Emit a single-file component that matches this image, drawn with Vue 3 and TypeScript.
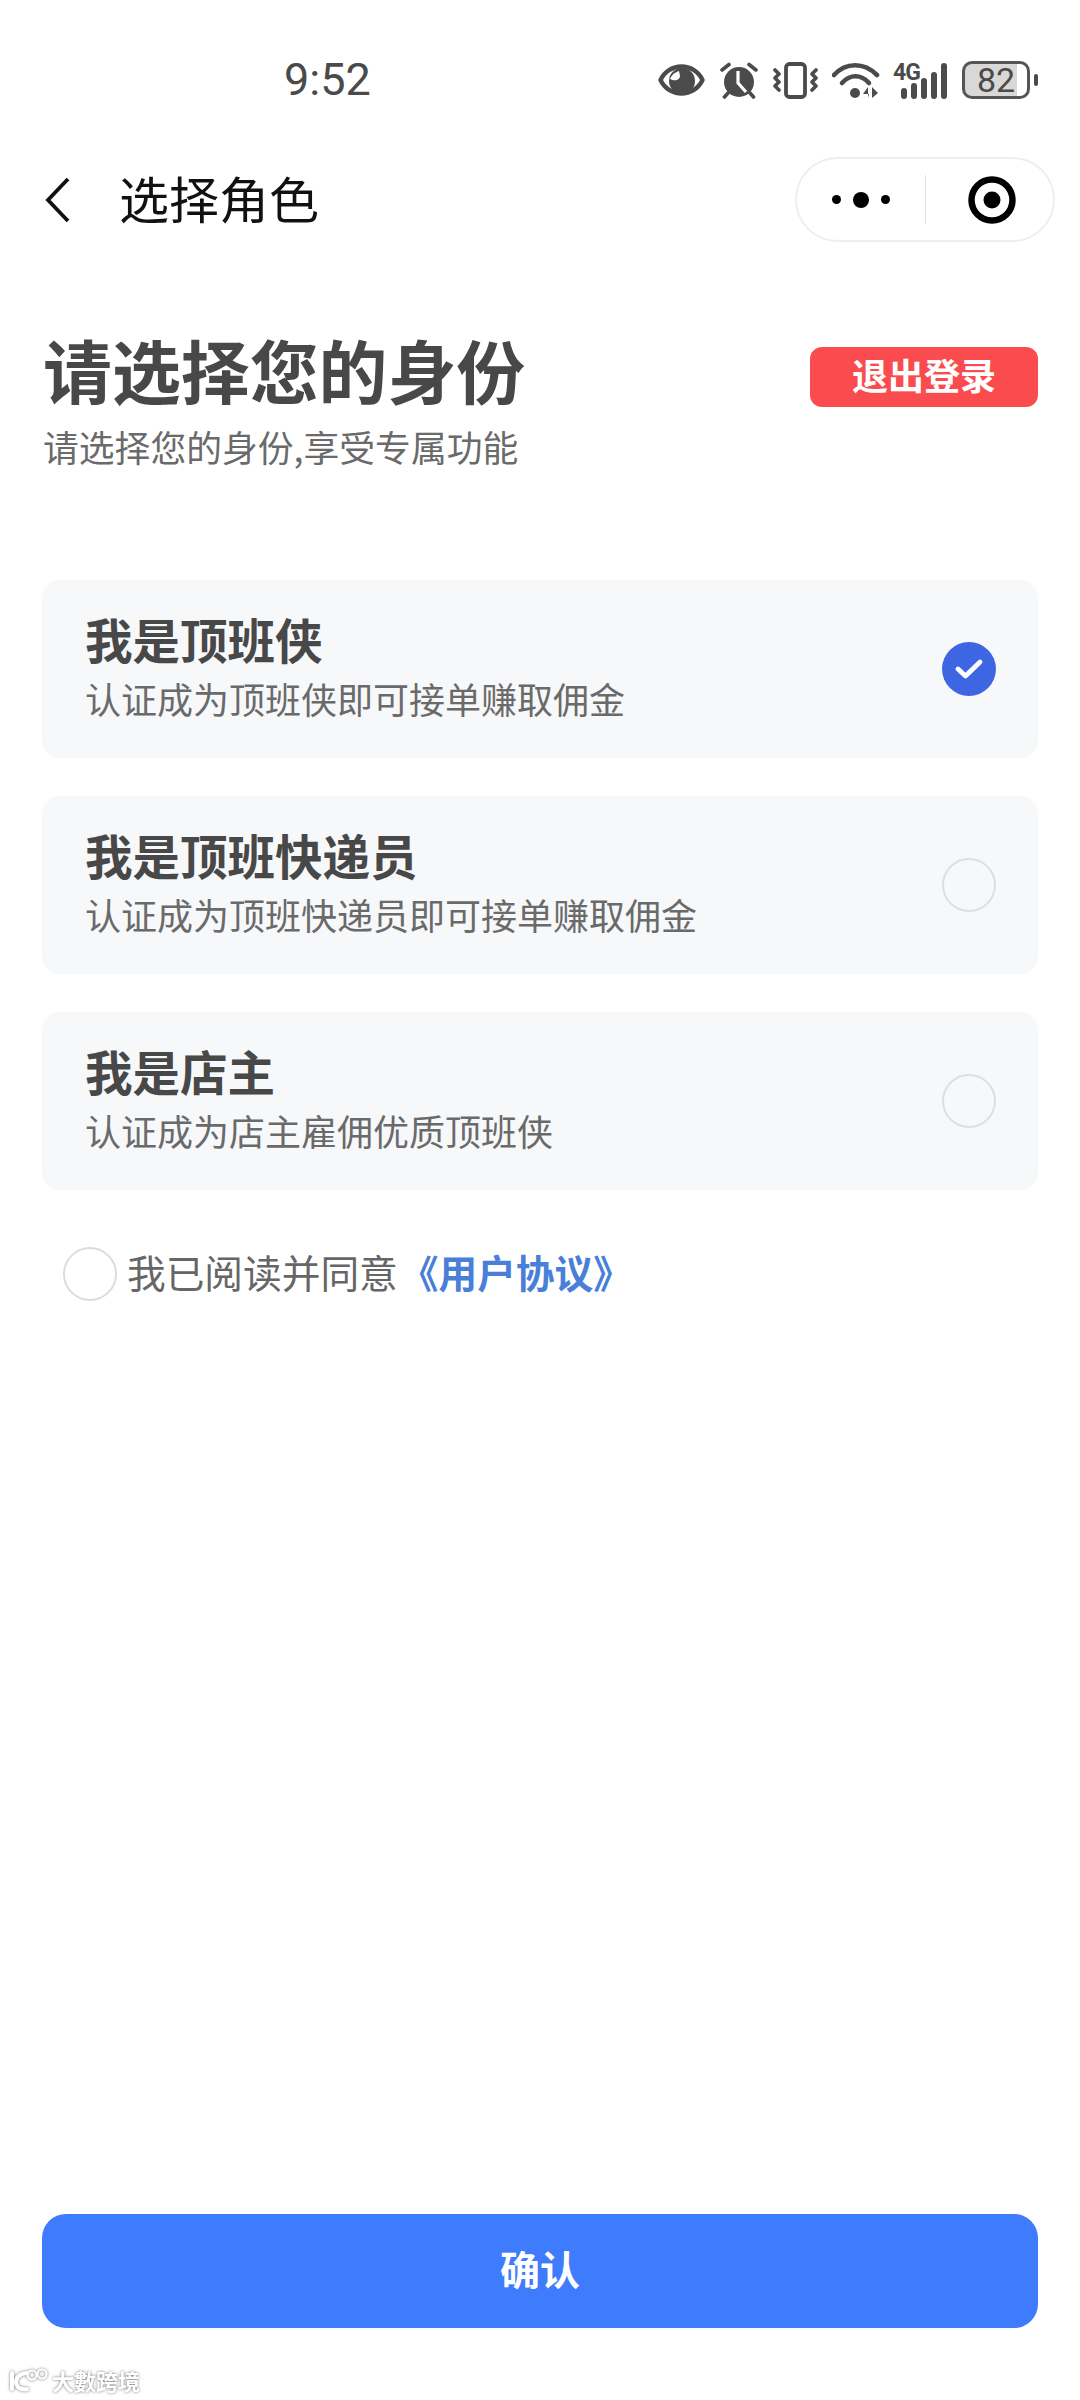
<script setup lang="ts">
interface Role {
  title: string
  desc: string
  checked: boolean
}
const roles: Role[] = [
  { title: '我是顶班侠', desc: '认证成为顶班侠即可接单赚取佣金', checked: true },
  { title: '我是顶班快递员', desc: '认证成为顶班快递员即可接单赚取佣金', checked: false },
  { title: '我是店主', desc: '认证成为店主雇佣优质顶班侠', checked: false },
]
const bars: number[] = [11, 16, 21, 27, 36]
</script>

<template>
  <div class="page">
    <div class="status">
      <span class="time">9:52</span>
      <div class="icons">
        <svg class="eye" width="47" height="34" viewBox="0 0 47 34">
          <path d="M2.5 17C11-1 36-1 44.5 17C36 35 11 35 2.5 17Z" fill="none" stroke="#4b4b4b" stroke-width="4.4" stroke-linejoin="round" />
          <circle cx="24" cy="18" r="13" fill="#4b4b4b" />
          <path d="M12 16C14 11 18 9 21 8L22 13C22 16 18 19 12 16Z" fill="#fff" />
        </svg>
        <svg class="alarm" width="38" height="37" viewBox="0 0 38 37">
          <circle cx="19" cy="20" r="15" fill="#4b4b4b" />
          <path d="M18 9V21L26 30" fill="none" stroke="#fff" stroke-width="3.2" />
          <path d="M2 8L9 2.5M36 8L29 2.5M8 31L4.5 35M30 31L33.5 35" fill="none" stroke="#4b4b4b" stroke-width="3.6" stroke-linecap="round" />
        </svg>
        <svg class="vibrate" width="45" height="37" viewBox="0 0 45 37">
          <rect x="13" y="2" width="19" height="33" rx="3.5" fill="none" stroke="#4b4b4b" stroke-width="3.8" />
          <path d="M2 8L6 12L2 16L6 20L2 24L6 28M43 8L39 12L43 16L39 20L43 24L39 28" fill="none" stroke="#4b4b4b" stroke-width="3.6" stroke-linecap="round" stroke-linejoin="round" />
        </svg>
        <svg class="wifi" width="48" height="37" viewBox="0 0 48 37">
          <path d="M2 13C14 0 32 0 45 13" fill="none" stroke="#4b4b4b" stroke-width="4.6" stroke-linecap="round" />
          <path d="M10 21C18 12 29 12 37 21" fill="none" stroke="#4b4b4b" stroke-width="4.6" stroke-linecap="round" />
          <circle cx="23" cy="31" r="5" fill="#4b4b4b" />
          <path d="M36 36V25L31 32H37ZM40 25V36L46 31Z" fill="#4b4b4b" />
        </svg>
        <div class="signal">
          <span class="net">4G</span>
          <div class="bars">
            <i v-for="h in bars" :key="h" class="bar" :style="{ height: h + 'px' }"></i>
          </div>
        </div>
        <div class="battery">
          <div class="cell">
            <span class="level">82</span>
          </div>
          <i class="nub"></i>
        </div>
      </div>
    </div>

    <div class="nav">
      <svg class="back" width="26" height="46" viewBox="0 0 26 46">
        <path d="M23 2L3 23L23 44" fill="none" stroke="#111" stroke-width="3.8" />
      </svg>
      <span class="nav-title">选择角色</span>
      <div class="capsule">
        <div class="more">
          <i class="dot"></i><i class="dot big"></i><i class="dot"></i>
        </div>
        <i class="divider"></i>
        <div class="close">
          <svg width="48" height="48" viewBox="0 0 48 48">
            <circle cx="24" cy="24" r="20.5" fill="none" stroke="#000" stroke-width="6.5" />
            <circle cx="24" cy="24" r="8.5" fill="#000" />
          </svg>
        </div>
      </div>
    </div>

    <div class="head">
      <div class="head-text">
        <h1>请选择您的身份</h1>
        <p>请选择您的身份,享受专属功能</p>
      </div>
      <div class="logout">退出登录</div>
    </div>

    <div class="cards">
      <div v-for="r in roles" :key="r.title" class="card">
        <div class="card-text">
          <div class="card-title">{{ r.title }}</div>
          <div class="card-desc">{{ r.desc }}</div>
        </div>
        <div class="radio" :class="{ on: r.checked }">
          <svg v-if="r.checked" width="30" height="24" viewBox="0 0 30 24">
            <path d="M4 12L11.5 19L26 5" fill="none" stroke="#fff" stroke-width="4.8" stroke-linecap="round" stroke-linejoin="round" />
          </svg>
        </div>
      </div>
    </div>

    <div class="agree">
      <i class="agree-circle"></i>
      <span class="agree-text">我已阅读并同意</span>
      <span class="agree-link">《用户协议》</span>
    </div>

    <div class="confirm">确认</div>

    <div class="watermark">
      <svg width="40" height="24" viewBox="0 0 40 24">
        <path d="M3 5V21M18 5C10 6 7 10 7 14C7 19 11 22 18 21" fill="none" stroke="#fff" stroke-width="4" stroke-linecap="round" />
        <circle cx="23" cy="7" r="4.5" fill="none" stroke="#fff" stroke-width="2.2" />
        <circle cx="33" cy="6" r="4.5" fill="none" stroke="#fff" stroke-width="2.2" />
      </svg>
      <span>大數跨境</span>
    </div>
  </div>
</template>

<style>
html,
body {
  margin: 0;
  background: #fff;
}
</style>

<style scoped>
.page {
  position: relative;
  box-sizing: border-box;
  width: 1080px;
  height: 2400px;
  padding-bottom: 72px;
  display: flex;
  flex-direction: column;
  background: #fff;
  font-family: "Noto Sans CJK SC", "Noto Sans", sans-serif;
  overflow: hidden;
}
i {
  display: block;
}
.status {
  height: 157px;
  box-sizing: border-box;
  padding: 61px 42px 0 284px;
  display: flex;
  justify-content: space-between;
  align-items: flex-start;
}
.time {
  font-family: Roboto, sans-serif;
  font-size: 45px;
  line-height: 38px;
  color: #4a4a4a;
}
.icons {
  display: flex;
  align-items: center;
  height: 38px;
}
.alarm { margin-left: 15px; }
.vibrate { margin-left: 15px; }
.wifi { margin-left: 14px; }
.signal {
  margin-left: 13px;
  position: relative;
  width: 54px;
  height: 38px;
}
.net {
  position: absolute;
  left: 0;
  top: 2px;
  font-family: Roboto, sans-serif;
  font-weight: 700;
  font-size: 23px;
  line-height: 20px;
  letter-spacing: -1px;
  color: #4b4b4b;
}
.bars {
  position: absolute;
  right: 0;
  bottom: 0;
  display: flex;
  align-items: flex-end;
  gap: 4px;
}
.bar {
  width: 6px;
  border-radius: 3px;
  background: #4b4b4b;
}
.battery {
  margin-left: 15px;
  display: flex;
  align-items: center;
  gap: 4px;
}
.cell {
  box-sizing: border-box;
  width: 68px;
  height: 38px;
  border: 3px solid #555;
  border-radius: 10px;
  background: linear-gradient(90deg, #d8d8d8 84%, #fff 84%);
  display: flex;
  align-items: center;
  justify-content: center;
}
.level {
  font-family: Roboto, sans-serif;
  font-size: 34px;
  line-height: 32px;
  color: #4a4a4a;
}
.nub {
  width: 4px;
  height: 12px;
  border-radius: 2px;
  background: #4b4b4b;
}
.nav {
  height: 85px;
  box-sizing: border-box;
  padding: 0 25px 0 45px;
  display: flex;
  align-items: center;
}
.nav-title {
  margin-left: 48px;
  margin-bottom: 6px;
  font-size: 50px;
  line-height: 60px;
  color: #111;
}
.capsule {
  margin-left: auto;
  box-sizing: border-box;
  width: 260px;
  height: 85px;
  border: 2px solid #eeeeee;
  border-radius: 43px;
  display: flex;
  align-items: center;
  background: #fff;
}
.more {
  width: 128px;
  display: flex;
  align-items: center;
  justify-content: center;
  gap: 12px;
}
.dot {
  width: 9px;
  height: 9px;
  border-radius: 50%;
  background: #000;
}
.dot.big {
  width: 16px;
  height: 16px;
}
.divider {
  width: 1px;
  height: 49px;
  background: #e2e2e2;
}
.close {
  flex: 1;
  padding-left: 5px;
  display: flex;
  align-items: center;
  justify-content: center;
}
.close svg {
  display: block;
}
.head {
  margin-top: 90px;
  padding: 0 42px 0 43px;
  display: flex;
  justify-content: space-between;
  align-items: flex-start;
}
.head h1 {
  margin: -3px 0 0;
  font-size: 68.9px;
  line-height: 80px;
  font-weight: 700;
  color: #484848;
}
.head p {
  margin: 13px 0 0;
  font-size: 35.8px;
  line-height: 48px;
  color: #6a6a6a;
}
.logout {
  margin-top: 15px;
  width: 228px;
  height: 60px;
  border-radius: 12px;
  background: #fa4b4e;
  color: #fff;
  font-size: 36px;
  font-weight: 700;
  line-height: 54px;
  text-align: center;
}
.cards {
  margin: 110px 42px 0;
  display: flex;
  flex-direction: column;
  gap: 38px;
}
.card {
  box-sizing: border-box;
  height: 178px;
  padding: 0 42px 0 43px;
  border-radius: 18px;
  background: #f7f8fa;
  display: flex;
  align-items: center;
  justify-content: space-between;
}
.card-text {
  padding-bottom: 3px;
}
.card-title {
  font-size: 47.5px;
  line-height: 60px;
  font-weight: 700;
  color: #484848;
}
.card-desc {
  font-size: 36px;
  line-height: 58px;
  color: #6a6a6a;
}
.radio {
  box-sizing: border-box;
  width: 54px;
  height: 54px;
  border-radius: 50%;
  border: 2px solid #dedede;
  display: flex;
  align-items: center;
  justify-content: center;
}
.radio.on {
  border: 0;
  background: #3f66e2;
}
.agree {
  margin-top: 57px;
  padding-left: 63px;
  display: flex;
  align-items: center;
  height: 54px;
}
.agree-circle {
  box-sizing: border-box;
  width: 54px;
  height: 54px;
  border-radius: 50%;
  border: 2px solid #dcdcdc;
}
.agree-text {
  margin-left: 10px;
  margin-bottom: 6px;
  font-size: 38.7px;
  line-height: 54px;
  color: #666;
}
.agree-link {
  margin-left: 2px;
  margin-bottom: 6px;
  font-size: 38.7px;
  line-height: 54px;
  font-weight: 700;
  color: #4a7fd8;
}
.confirm {
  margin: auto 42px 0;
  height: 114px;
  border-radius: 24px;
  background: #3f7bfd;
  color: #fff;
  font-size: 40px;
  font-weight: 700;
  line-height: 108px;
  text-align: center;
}
.watermark {
  position: absolute;
  left: 9px;
  top: 2367px;
  display: flex;
  align-items: center;
  gap: 3px;
  color: #fff;
  font-size: 22px;
  font-weight: 700;
  line-height: 26px;
  filter: drop-shadow(0 0 1.5px #777);
}
</style>
